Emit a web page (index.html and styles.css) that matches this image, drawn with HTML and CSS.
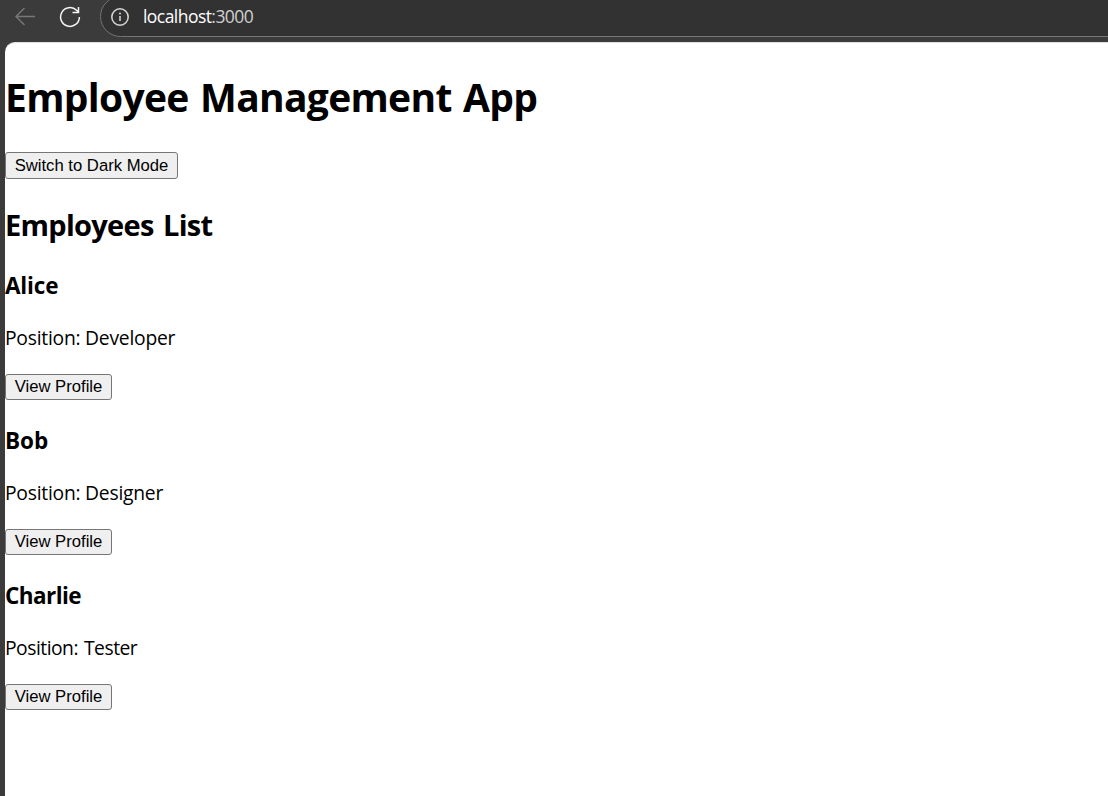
FILE: index.html
```html
<!DOCTYPE html>
<html lang="en">
<head>
<meta charset="utf-8">
<title>Employee Management App</title>
<link rel="stylesheet" href="styles.css">
</head>
<body>
<div class="browser">
  <div class="toolbar">
    <svg class="back" width="22" height="20" viewBox="0 0 22 20"><path d="M21 10.500H2M10.500 2L2 10.500l8.500 8.500"/></svg>
    <svg class="reload" width="22" height="22" viewBox="0 0 22 22"><path d="M20.400 11A9.400 9.400 0 1 1 17.600 4.300L19.200 6M19.500 1v5.500H13.500"/></svg>
    <div class="address">
      <svg class="info" width="20" height="20" viewBox="0 0 20 20"><circle cx="10" cy="10" r="8.200"/><path d="M10 9v5"/><circle class="dot" cx="10" cy="6.500" r="1"/></svg>
      <span class="url"><span class="host">localhost</span><span class="port">:3000</span></span>
    </div>
  </div>
  <main class="page">
    <h1>Employee Management App</h1>
    <button class="theme">Switch to Dark Mode</button>
    <h2>Employees List</h2>
    <section class="employee"><h3 class="alice">Alice</h3><p>Position: Developer</p><button class="view">View Profile</button></section>
    <section class="employee"><h3>Bob</h3><p>Position: Designer</p><button class="view">View Profile</button></section>
    <section class="employee"><h3 class="charlie">Charlie</h3><p class="tester">Position: Tester</p><button class="view">View Profile</button></section>
  </main>
</div>
</body>
</html>
```
FILE: styles.css
```css
* { box-sizing: border-box; }
body { margin: 0; overflow: hidden; font-family: "Open Sans", sans-serif; color: #000; }
h1, h2, h3, p { margin: 0; white-space: nowrap; }
.browser { height: 796px; background: #3b3b3b; display: flex; flex-direction: column; }
.toolbar { height: 42px; flex: none; display: flex; align-items: flex-start; overflow: hidden; }
svg { display: block; flex: none; fill: none; stroke-width: 1.500; }
.back { margin: 6px 0 0 14px; stroke: #777; }
.reload { margin: 6px 0 0 23px; stroke: #f4f4f4; }
.address { height: 41px; margin: -4px -40px 0 19px; flex: 1; display: flex; align-items: center; padding-left: 9px; border: 1px solid #757575; border-radius: 21px; background: #323232; }
.info { stroke: #d8d8d8; }
.info .dot { fill: #d8d8d8; stroke: none; }
.url { margin: -2px 0 0 13px; font-size: 17.500px; line-height: 24px; letter-spacing: -0.550px; }
.host { color: #fff; }
.port { color: #d0d0d0; }
.page { flex: 1; margin-left: 5px; padding-top: 27px; background: #fff; border-top: 1px solid #e0e0e0; border-top-left-radius: 10px; display: flex; flex-direction: column; align-items: flex-start; }
h1 { font-size: 39px; line-height: 54px; letter-spacing: -0.690px; word-spacing: 2px; }
h2 { margin-top: 26px; font-size: 29px; line-height: 40px; letter-spacing: -0.710px; word-spacing: 2.500px; }
h3 { margin-top: 26px; font-size: 22.500px; line-height: 30px; }
.alice { letter-spacing: -0.150px; }
.charlie { letter-spacing: -0.550px; }
p { margin-top: 23px; font-size: 19.300px; line-height: 27px; letter-spacing: -0.240px; }
.tester { letter-spacing: -0.500px; word-spacing: 1.500px; }
button { display: block; padding: 0; border: 1px solid #767676; border-radius: 3px; background: #efefef; color: #000; font-family: "Liberation Sans", Arial, sans-serif; font-size: 16.667px; line-height: 24px; white-space: nowrap; }
.theme { margin-top: 28px; width: 173px; height: 27px; }
.view { margin-top: 23px; width: 107px; height: 26px; }
```
